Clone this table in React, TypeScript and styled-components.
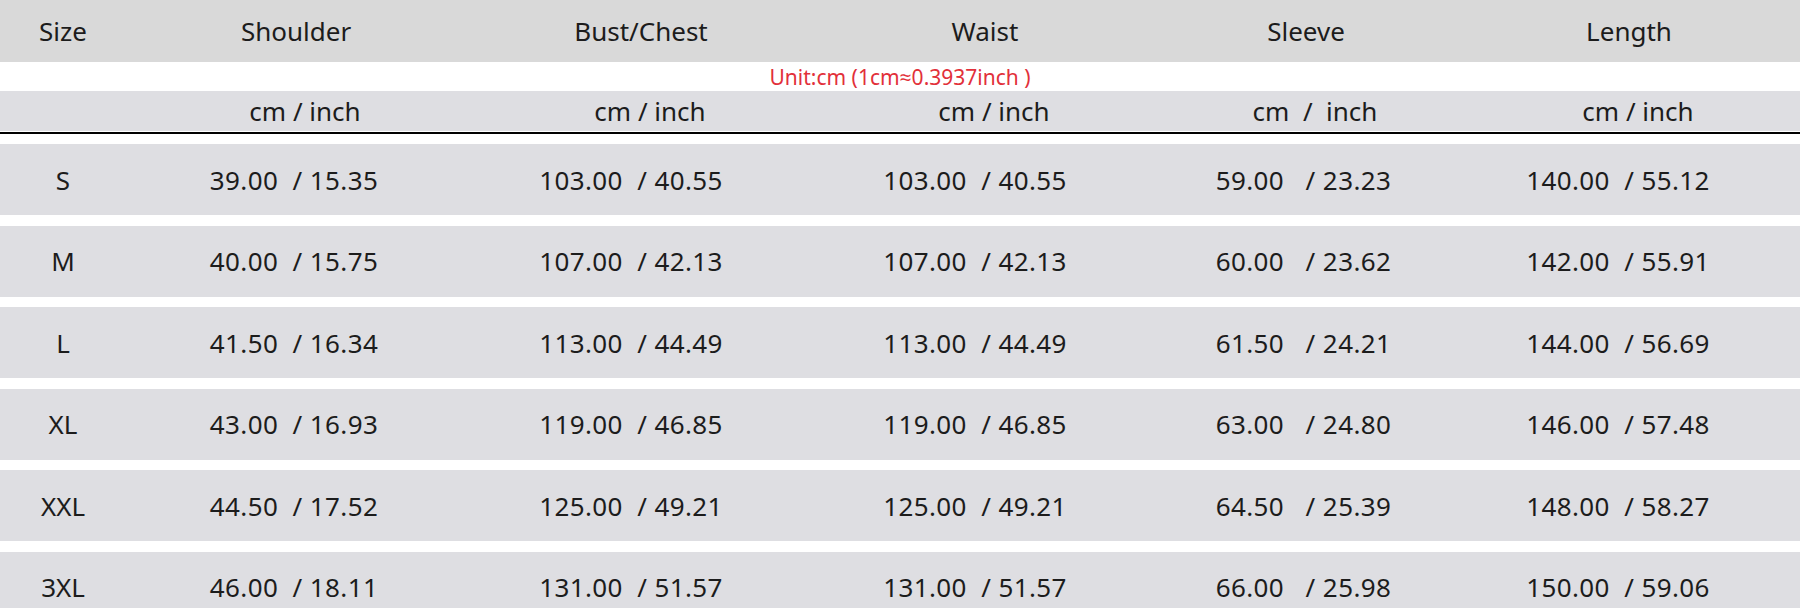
import React from "react";
import styled, { createGlobalStyle } from "styled-components";

const GlobalStyle = createGlobalStyle`
  html, body {
    margin: 0;
    padding: 0;
    background: #ffffff;
  }
  body {
    font-family: "Noto Sans", "Open Sans", sans-serif;
    color: #1c1c1c;
  }
`;

const COLUMNS = "126px 340px 350px 338px 304px 1fr";

const headers = ["Size", "Shoulder", "Bust/Chest", "Waist", "Sleeve", "Length"];
const units = ["", "cm / inch", "cm / inch", "cm / inch", "cm  /  inch", "cm / inch"];

// the values sit a little off the column centre in the original chart
const valueInset = [0, 4, 20, 20, 5, 22];

const rows: string[][] = [
  ["S", "39.00  / 15.35", "103.00  / 40.55", "103.00  / 40.55", "59.00   / 23.23", "140.00  / 55.12"],
  ["M", "40.00  / 15.75", "107.00  / 42.13", "107.00  / 42.13", "60.00   / 23.62", "142.00  / 55.91"],
  ["L", "41.50  / 16.34", "113.00  / 44.49", "113.00  / 44.49", "61.50   / 24.21", "144.00  / 56.69"],
  ["XL", "43.00  / 16.93", "119.00  / 46.85", "119.00  / 46.85", "63.00   / 24.80", "146.00  / 57.48"],
  ["XXL", "44.50  / 17.52", "125.00  / 49.21", "125.00  / 49.21", "64.50   / 25.39", "148.00  / 58.27"],
  ["3XL", "46.00  / 18.11", "131.00  / 51.57", "131.00  / 51.57", "66.00   / 25.98", "150.00  / 59.06"],
];

const SizeTable: React.FC = () => {
  return (
    <Page>
      <HeaderRow>
        {headers.map(h => (
          <HeadCell key={h}>{h}</HeadCell>
        ))}
      </HeaderRow>
      <UnitNote>Unit:cm (1cm≈0.3937inch )</UnitNote>
      <SubHeaderRow>
        {units.map((u, i) => (
          <UnitCell key={i}>{u}</UnitCell>
        ))}
      </SubHeaderRow>
      <Divider />
      <Body>
        {rows.map(r => (
          <DataRow key={r[0]}>
            {r.map((v, i) => (
              <DataCell key={i} $first={i === 0} $inset={valueInset[i]}>
                {v}
              </DataCell>
            ))}
          </DataRow>
        ))}
      </Body>
    </Page>
  );
};

const Page = styled.div`
  width: 1800px;
  height: 608px;
  overflow: hidden;
`;

const HeaderRow = styled.div`
  display: grid;
  grid-template-columns: ${COLUMNS};
  height: 62px;
  background: #d9d9d9;
`;

const HeadCell = styled.div`
  display: flex;
  align-items: center;
  justify-content: center;
  font-size: 26px;
  line-height: 1;
`;

const UnitNote = styled.div`
  height: 28px;
  display: flex;
  align-items: center;
  justify-content: center;
  padding-top: 1px;
  color: #e2303a;
  font-size: 21px;
  line-height: 1;
`;

const SubHeaderRow = styled.div`
  display: grid;
  grid-template-columns: ${COLUMNS};
  height: 40px;
  background: #dedee2;
`;

const UnitCell = styled.div`
  display: flex;
  align-items: center;
  justify-content: center;
  padding-left: 18px;
  font-size: 26px;
  line-height: 1;
  white-space: pre;
`;

const Divider = styled.div`
  height: 2px;
  margin-top: 1px;
  background: #000000;
`;

const Body = styled.div`
  display: flex;
  flex-direction: column;
  gap: 10.5px;
  padding-top: 10px;
`;

const DataRow = styled.div`
  display: grid;
  grid-template-columns: ${COLUMNS};
  height: 71px;
  flex-shrink: 0;
  background: #dedee2;
`;

const DataCell = styled.div<{ $first?: boolean; $inset: number }>`
  display: flex;
  align-items: center;
  justify-content: center;
  padding-right: ${p => p.$inset}px;
  font-size: 26px;
  letter-spacing: ${p => (p.$first ? "0" : "0.4px")};
  line-height: 1;
  white-space: pre;
`;

export default function App() {
  return (
    <>
      <GlobalStyle />
      <SizeTable />
    </>
  );
}
